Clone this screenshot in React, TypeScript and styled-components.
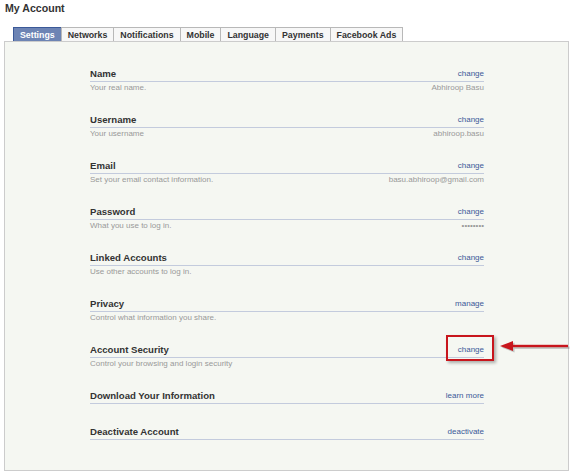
import React from "react";
import styled, { createGlobalStyle } from "styled-components";

const Global = createGlobalStyle`
  html, body { margin: 0; padding: 0; background: #ffffff; }
  body { font-family: "Liberation Sans", Arial, sans-serif; }
`;

const Page = styled.div`
  width: 575px;
  height: 473px;
  padding: 2px 6px 0 4px;
  box-sizing: border-box;
  display: flex;
  flex-direction: column;
`;

const Title = styled.h1`
  margin: 0 0 0 1px;
  font-size: 10.6px;
  line-height: 13px;
  font-weight: bold;
  color: #333333;
`;

const TabBar = styled.div`
  display: flex;
  margin: 12px 0 0 9px;
  height: 14px;
`;

const Tab = styled.div<{ $active?: boolean }>`
  box-sizing: border-box;
  height: 14px;
  padding: 0 6px;
  display: flex;
  align-items: center;
  font-size: 8.8px;
  font-weight: bold;
  color: ${(p) => (p.$active ? "#ffffff" : "#333333")};
  background: ${(p) => (p.$active ? "#6d84b4" : "#f7f7f7")};
  border: 1px solid ${(p) => (p.$active ? "#3b5998" : "#b8b8b8")};
  border-bottom: none;
  margin-left: -1px;
  &:first-child { margin-left: 0; }
`;

const Panel = styled.div`
  flex: 1;
  margin-bottom: 2px;
  background: #f5f7f2;
  border: 1px solid #cccccc;
  padding: 26px 84px 0 85px;
  display: flex;
  flex-direction: column;
`;

const Row = styled.div`
  display: flex;
  flex-direction: column;
  margin-bottom: 22px;
`;

const Head = styled.div`
  display: flex;
  justify-content: space-between;
  align-items: flex-end;
  height: 12px;
  padding-bottom: 1px;
  border-bottom: 1px solid #c3cbdd;
`;

const Label = styled.span`
  font-size: 9.6px;
  font-weight: bold;
  color: #333333;
  line-height: 12px;
`;

const Action = styled.span`
  position: relative;
  font-size: 8px;
  color: #3b5998;
  line-height: 12px;
`;

const Highlight = styled.span`
  position: absolute;
  left: -12px;
  top: -9px;
  width: 44px;
  height: 22px;
  border: 2px solid #c8161d;
  box-shadow: 2px 2px 3px rgba(0, 0, 0, 0.3);
`;

const Arrow = styled.svg`
  position: absolute;
  left: 42px;
  top: -5px;
  width: 70px;
  height: 14px;
  overflow: visible;
`;

const Desc = styled.div`
  display: flex;
  justify-content: space-between;
  height: 10px;
  font-size: 8px;
  line-height: 11px;
  color: #999999;
`;

type Item = { label: string; action: string; desc?: string; value?: string; mark?: boolean };

const items: Item[] = [
  { label: "Name", action: "change", desc: "Your real name.", value: "Abhiroop Basu" },
  { label: "Username", action: "change", desc: "Your username", value: "abhiroop.basu" },
  { label: "Email", action: "change", desc: "Set your email contact information.", value: "basu.abhiroop@gmail.com" },
  { label: "Password", action: "change", desc: "What you use to log in.", value: "••••••••" },
  { label: "Linked Accounts", action: "change", desc: "Use other accounts to log in." },
  { label: "Privacy", action: "manage", desc: "Control what information you share." },
  { label: "Account Security", action: "change", desc: "Control your browsing and login security", mark: true },
  { label: "Download Your Information", action: "learn more" },
  { label: "Deactivate Account", action: "deactivate" },
];

const tabs = ["Settings", "Networks", "Notifications", "Mobile", "Language", "Payments", "Facebook Ads"];

export default function App() {
  return (
    <>
      <Global />
      <Page>
        <Title>My Account</Title>
        <TabBar>
          {tabs.map((t, i) => (
            <Tab key={t} $active={i === 0}>{t}</Tab>
          ))}
        </TabBar>
        <Panel>
          {items.map((it) => (
            <Row key={it.label}>
              <Head>
                <Label>{it.label}</Label>
                <Action>
                  {it.action}
                  {it.mark && (
                    <>
                      <Highlight />
                      <Arrow viewBox="0 0 70 14">
                        <g opacity="0.35" transform="translate(1.5,1.5)">
                          <rect x="10" y="6" width="58" height="2.4" fill="#666" />
                          <polygon points="0,7 13,2 13,12" fill="#666" />
                        </g>
                        <rect x="10" y="5.8" width="58" height="2.4" fill="#c8161d" />
                        <polygon points="0,7 13,2 13,12" fill="#c8161d" />
                      </Arrow>
                    </>
                  )}
                </Action>
              </Head>
              {it.desc && (
                <Desc>
                  <span>{it.desc}</span>
                  <span>{it.value ?? ""}</span>
                </Desc>
              )}
            </Row>
          ))}
        </Panel>
      </Page>
    </>
  );
}
